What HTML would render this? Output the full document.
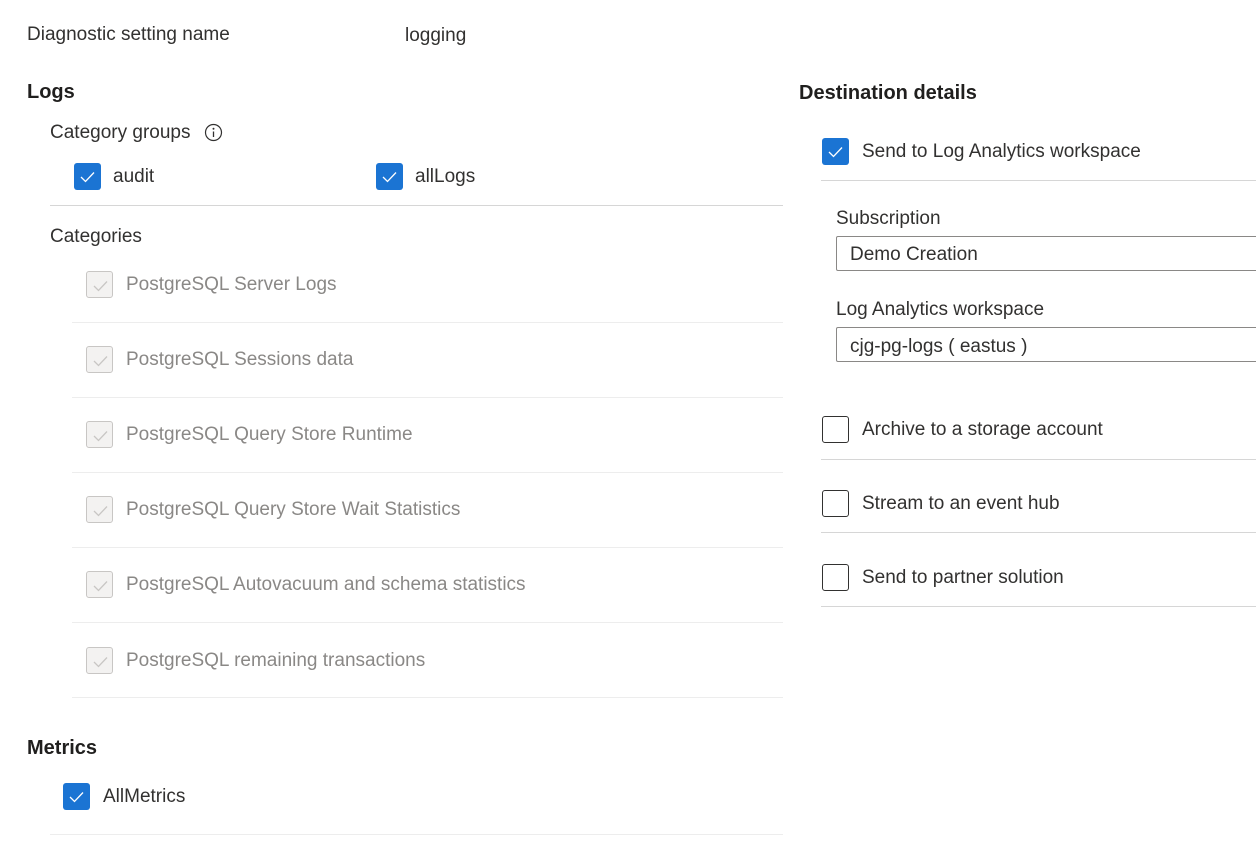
<!DOCTYPE html>
<html><head><meta charset="utf-8"><style>
body{margin:0;width:1256px;height:841px;background:#fff;position:relative;overflow:hidden;font-family:"Liberation Sans",sans-serif;font-size:19px;color:#323130}
.t{position:absolute;line-height:24px;white-space:nowrap;top:0}
.b{font-weight:bold;font-size:20px;color:#201f1e}
.g{color:#8a8886}
.cb{position:absolute;width:27px;height:27px;box-sizing:border-box;border-radius:3px}
.on{background:#1b74d3}
.off{border:1.5px solid #323130;background:#fff}
.dis{border:1px solid #c8c6c4;background:#f3f2f1}
.cb svg{position:absolute;left:0;top:0}
.hr{position:absolute;height:1px;background:#d6d6d6}
.inp{position:absolute;left:836px;width:430px;height:35px;box-sizing:border-box;border:1px solid #8a8886;border-radius:2px}
</style></head><body>
<div class="t" style="left:27px;top:23px">Diagnostic setting name</div>
<div class="t" style="left:405px;top:24px">logging</div>
<div class="t b" style="left:27px;top:80px">Logs</div>
<div class="t" style="left:50px;top:121px">Category groups</div>
<svg style="position:absolute;left:204px;top:123px" width="19" height="19"><circle cx="9.5" cy="9.5" r="8" fill="none" stroke="#323130" stroke-width="1.2"/><circle cx="9.5" cy="5.8" r="1" fill="#323130"/><path d="M9.5 8.5v5.5" stroke="#323130" stroke-width="1.3"/></svg>

<div class="cb on" style="left:74px;top:163px"><svg width="27" height="27"><path d="M7 14l4.5 4.5L20 9.5" fill="none" stroke="#fff" stroke-width="1.3"/></svg></div>
<div class="t" style="left:113px;top:165px">audit</div>
<div class="cb on" style="left:376px;top:163px"><svg width="27" height="27"><path d="M7 14l4.5 4.5L20 9.5" fill="none" stroke="#fff" stroke-width="1.3"/></svg></div>
<div class="t" style="left:415px;top:165px">allLogs</div>
<div class="hr" style="left:50px;top:205px;width:733px"></div>
<div class="t" style="left:50px;top:225px">Categories</div>

<div class="cb dis" style="left:86px;top:271px"><svg width="27" height="27"><path d="M7 14l4.5 4.5L20 9.5" fill="none" stroke="#c8c6c4" stroke-width="1.3"/></svg></div>
<div class="t g" style="left:126px;top:273px">PostgreSQL Server Logs</div>
<div class="hr" style="left:72px;top:322px;width:711px;background:#ededed"></div>
<div class="cb dis" style="left:86px;top:346px"><svg width="27" height="27"><path d="M7 14l4.5 4.5L20 9.5" fill="none" stroke="#c8c6c4" stroke-width="1.3"/></svg></div>
<div class="t g" style="left:126px;top:348px">PostgreSQL Sessions data</div>
<div class="hr" style="left:72px;top:397px;width:711px;background:#ededed"></div>
<div class="cb dis" style="left:86px;top:421px"><svg width="27" height="27"><path d="M7 14l4.5 4.5L20 9.5" fill="none" stroke="#c8c6c4" stroke-width="1.3"/></svg></div>
<div class="t g" style="left:126px;top:423px">PostgreSQL Query Store Runtime</div>
<div class="hr" style="left:72px;top:472px;width:711px;background:#ededed"></div>
<div class="cb dis" style="left:86px;top:496px"><svg width="27" height="27"><path d="M7 14l4.5 4.5L20 9.5" fill="none" stroke="#c8c6c4" stroke-width="1.3"/></svg></div>
<div class="t g" style="left:126px;top:498px">PostgreSQL Query Store Wait Statistics</div>
<div class="hr" style="left:72px;top:547px;width:711px;background:#ededed"></div>
<div class="cb dis" style="left:86px;top:571px"><svg width="27" height="27"><path d="M7 14l4.5 4.5L20 9.5" fill="none" stroke="#c8c6c4" stroke-width="1.3"/></svg></div>
<div class="t g" style="left:126px;top:573px">PostgreSQL Autovacuum and schema statistics</div>
<div class="hr" style="left:72px;top:622px;width:711px;background:#ededed"></div>
<div class="cb dis" style="left:86px;top:647px"><svg width="27" height="27"><path d="M7 14l4.5 4.5L20 9.5" fill="none" stroke="#c8c6c4" stroke-width="1.3"/></svg></div>
<div class="t g" style="left:126px;top:649px">PostgreSQL remaining transactions</div>
<div class="hr" style="left:72px;top:697px;width:711px;background:#ededed"></div>

<div class="t b" style="left:27px;top:736px">Metrics</div>
<div class="cb on" style="left:63px;top:783px"><svg width="27" height="27"><path d="M7 14l4.5 4.5L20 9.5" fill="none" stroke="#fff" stroke-width="1.3"/></svg></div>
<div class="t" style="left:103px;top:785px">AllMetrics</div>
<div class="hr" style="left:50px;top:834px;width:733px;background:#ededed"></div>

<div class="t b" style="left:799px;top:81px">Destination details</div>
<div class="cb on" style="left:822px;top:138px"><svg width="27" height="27"><path d="M7 14l4.5 4.5L20 9.5" fill="none" stroke="#fff" stroke-width="1.3"/></svg></div>
<div class="t" style="left:862px;top:140px">Send to Log Analytics workspace</div>
<div class="hr" style="left:821px;top:180px;width:435px"></div>
<div class="t" style="left:836px;top:207px">Subscription</div>
<div class="inp" style="top:236px"></div>
<div class="t" style="left:850px;top:243px">Demo Creation</div>
<div class="t" style="left:836px;top:298px">Log Analytics workspace</div>
<div class="inp" style="top:327px"></div>
<div class="t" style="left:850px;top:335px">cjg-pg-logs ( eastus )</div>

<div class="cb off" style="left:822px;top:416px"></div>
<div class="t" style="left:862px;top:418px">Archive to a storage account</div>
<div class="hr" style="left:821px;top:459px;width:435px"></div>
<div class="cb off" style="left:822px;top:490px"></div>
<div class="t" style="left:862px;top:492px">Stream to an event hub</div>
<div class="hr" style="left:821px;top:532px;width:435px"></div>
<div class="cb off" style="left:822px;top:564px"></div>
<div class="t" style="left:862px;top:566px">Send to partner solution</div>
<div class="hr" style="left:821px;top:606px;width:435px"></div>
</body></html>
